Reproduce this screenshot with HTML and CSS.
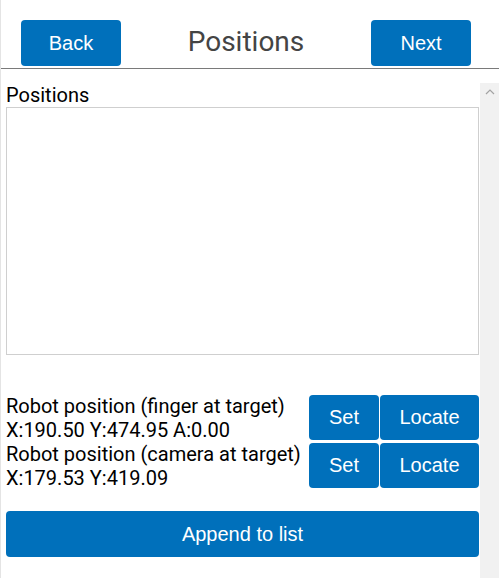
FILE: index.html
```html
<!DOCTYPE html>
<html>
<head>
<meta charset="utf-8">
<link rel="stylesheet" href="styles.css">
</head>
<body>
<div class="page">
  <header class="header">
    <button class="btn nav-btn">Back</button>
    <div class="title">Positions</div>
    <button class="btn nav-btn">Next</button>
  </header>
  <div class="body">
    <main class="content">
      <div class="label">Positions</div>
      <textarea class="list"></textarea>
      <div class="pos-row first">
        <div class="pos-text">Robot position (finger at target)<br>X:190.50 Y:474.95 A:0.00</div>
        <div class="pos-btns">
          <button class="btn set">Set</button>
          <button class="btn locate">Locate</button>
        </div>
      </div>
      <div class="pos-row">
        <div class="pos-text">Robot position (camera at target)<br>X:179.53 Y:419.09</div>
        <div class="pos-btns">
          <button class="btn set">Set</button>
          <button class="btn locate">Locate</button>
        </div>
      </div>
      <button class="btn append">Append to list</button>
    </main>
    <div class="scrollbar">
      <svg class="arrow" width="10" height="6" viewBox="0 0 10 6"><path d="M1 5 L5 1 L9 5" fill="none" stroke="#a3a3a3" stroke-width="1.2"/></svg>
    </div>
  </div>
</div>
</body>
</html>
```
FILE: styles.css
```css
* { box-sizing: border-box; }
html, body { margin: 0; padding: 0; background: #fff; }
body {
  font-family: Roboto, "Liberation Sans", sans-serif;
  color: #000;
  width: 499px;
  height: 578px;
  overflow: hidden;
}
.page {
  height: 578px;
  display: flex;
  flex-direction: column;
  position: relative;
}
.page::before {
  content: "";
  position: absolute;
  left: 0;
  top: 0;
  bottom: 0;
  width: 1px;
  background: #e4e4e4;
}
.header {
  height: 69px;
  border-bottom: 1px solid #7a7a7a;
  display: flex;
  align-items: flex-start;
  padding: 20px 28px 0 21px;
}
.btn {
  font-family: "Liberation Sans", Arial, sans-serif;
  font-size: 20px;
  color: #fff;
  background: #0070bb;
  border: none;
  border-radius: 4px;
  padding: 0;
  margin: 0;
  cursor: pointer;
}
.nav-btn {
  width: 100px;
  height: 46px;
}
.title {
  flex: 1;
  text-align: center;
  font-size: 28px;
  line-height: 44px;
  color: #444;
}
.body {
  flex: 1;
  margin-top: 14px;
  display: flex;
  min-height: 0;
}
.content {
  flex: 1;
  padding: 1px 1px 0 6px;
  display: flex;
  flex-direction: column;
}
.label {
  font-size: 20px;
  line-height: 23px;
  height: 23px;
}
.list {
  margin: 0;
  height: 248px;
  width: 100%;
  border: 1px solid #cfcfcf;
  resize: none;
  outline: none;
  background: #fff;
}
.pos-row {
  display: flex;
  height: 48px;
  align-items: flex-start;
}
.pos-row.first { margin-top: 34px; }
.pos-text {
  flex: 1;
  font-size: 20px;
  line-height: 24px;
  white-space: nowrap;
  margin-top: 5px;
}
.pos-btns {
  display: flex;
  gap: 1px;
  margin-top: 6px;
}
.set { width: 70px; height: 45px; }
.locate { width: 99px; height: 45px; }
.append {
  margin-top: 26px;
  height: 46px;
  width: 100%;
}
.scrollbar {
  width: 19px;
  background: #f1f1f1;
  display: flex;
  justify-content: center;
  padding-top: 6px;
}
.arrow { display: block; }
```
